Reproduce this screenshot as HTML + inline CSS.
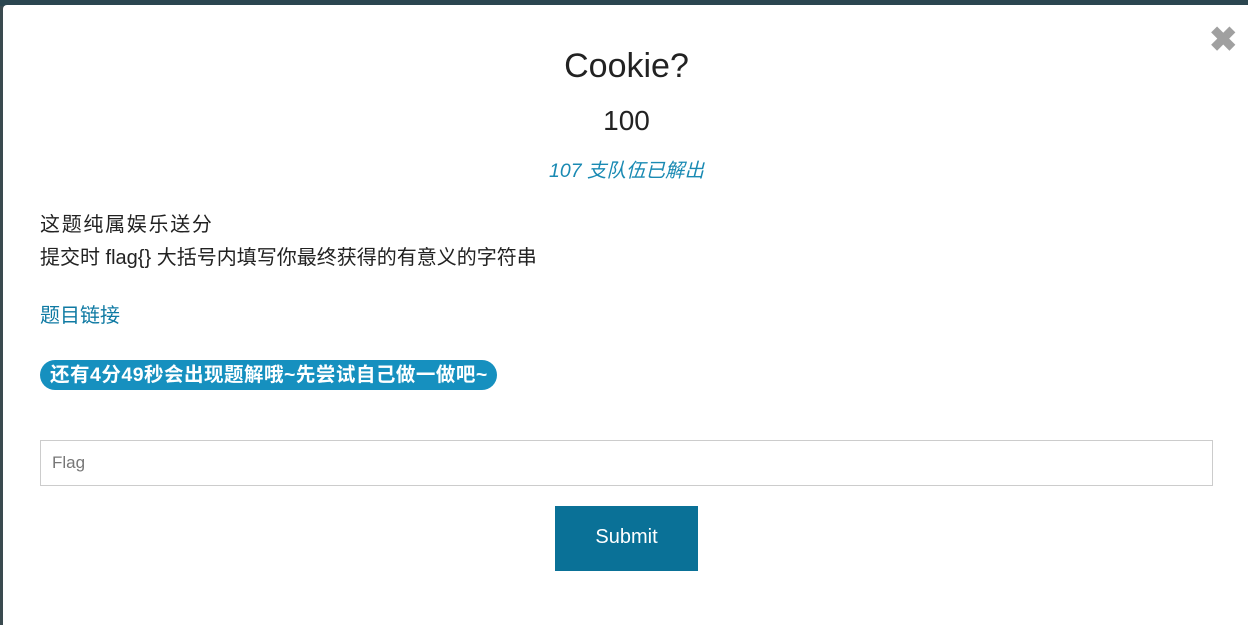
<!DOCTYPE html>
<html><head><meta charset="utf-8"><style>
body{margin:0;width:1248px;height:620px;overflow:hidden;background:#3a4a4f;font-family:"Liberation Sans","Noto Sans CJK SC",sans-serif;position:relative}
.top{position:absolute;left:0;top:0;width:1248px;height:6px;background:#2b4650}
.modal{position:absolute;left:3px;top:5px;width:1245px;height:620px;background:#fff;border-radius:4px 0 0 0}
.c{position:absolute;left:0;width:1247px;text-align:center;color:#222}
.close{position:absolute;left:1206px;top:15px;font-size:34px;color:#a0a0a0;font-weight:bold;line-height:40px}
.txt{position:absolute;left:37px;font-size:20px;color:#222}
.badge{position:absolute;left:37px;top:355px;width:457px;height:30px;border-radius:15px;background:#1690bf;color:#fff;font-size:19.5px;font-weight:bold;line-height:30px;text-indent:10px;white-space:nowrap;letter-spacing:0.5px}
.inp{position:absolute;left:37px;top:435px;width:1171px;height:44px;border:1px solid #ccc;font-size:17px;color:#777;line-height:44px;text-indent:11px}
.btn{position:absolute;left:552px;top:501px;width:143px;height:65px;background:#0a7197;color:#fff;font-size:20px;line-height:62px;text-align:center}
</style></head><body>
<div class="top"></div>
<div class="modal">
<div class="close">✖</div>
<div class="c" style="top:42px;font-size:34px">Cookie?</div>
<div class="c" style="top:100px;font-size:28px">100</div>
<div class="c" style="top:149px;font-size:19.5px;color:#1a8ab3;font-style:italic">107 支队伍已解出</div>
<div class="txt" style="top:203px;letter-spacing:1.7px">这题纯属娱乐送分</div>
<div class="txt" style="top:236px">提交时 flag{} 大括号内填写你最终获得的有意义的字符串</div>
<div class="txt" style="top:294px;color:#0f7aa3">题目链接</div>
<div class="badge">还有4分49秒会出现题解哦~先尝试自己做一做吧~</div>
<div class="inp">Flag</div>
<div class="btn">Submit</div>
</div>
</body></html>
